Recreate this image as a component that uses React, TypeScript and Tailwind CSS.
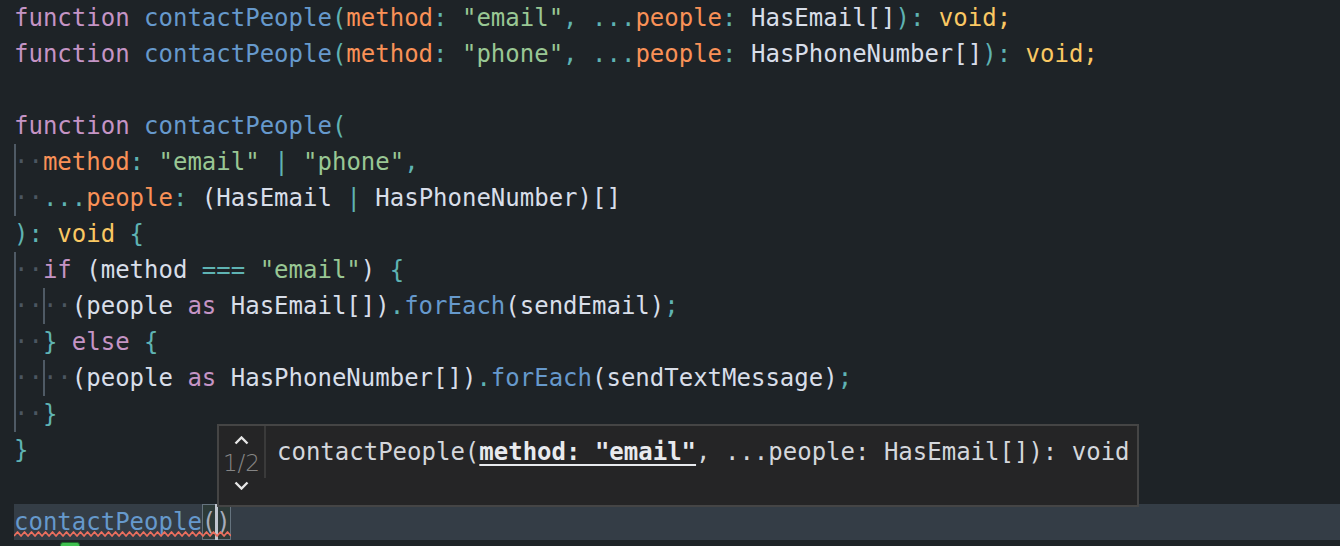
type C = "kw" | "fn" | "pm" | "st" | "pu" | "ty" | "vd";
type Tok = [string, C];

const color: Record<C, string> = {
	kw: "text-[#c594c5]",
	fn: "text-[#6699cc]",
	pm: "text-[#f99157]",
	st: "text-[#99c794]",
	pu: "text-[#5fb3b3]",
	ty: "text-[#d8dee9]",
	vd: "text-[#fac863]",
};

// indent: list of cells, true = cell carries an indent guide
type Line = { indent?: boolean[]; toks: Tok[] };

const lines: Line[] = [
	{
		toks: [
			["function", "kw"], [" ", "ty"], ["contactPeople", "fn"], ["(", "pu"], ["method", "pm"], [":", "pu"],
			[" ", "ty"], ['"email"', "st"], [",", "pu"], [" ", "ty"], ["...", "pu"], ["people", "pm"], [":", "pu"],
			[" ", "ty"], ["HasEmail[]", "ty"], [")", "pu"], [":", "pu"], [" ", "ty"], ["void", "vd"], [";", "vd"],
		],
	},
	{
		toks: [
			["function", "kw"], [" ", "ty"], ["contactPeople", "fn"], ["(", "pu"], ["method", "pm"], [":", "pu"],
			[" ", "ty"], ['"phone"', "st"], [",", "pu"], [" ", "ty"], ["...", "pu"], ["people", "pm"], [":", "pu"],
			[" ", "ty"], ["HasPhoneNumber[]", "ty"], [")", "pu"], [":", "pu"], [" ", "ty"], ["void", "vd"], [";", "vd"],
		],
	},
	{ toks: [] },
	{ toks: [["function", "kw"], [" ", "ty"], ["contactPeople", "fn"], ["(", "pu"]] },
	{
		indent: [true, false],
		toks: [["method", "pm"], [":", "pu"], [" ", "ty"], ['"email"', "st"], [" ", "ty"], ["|", "pu"], [" ", "ty"], ['"phone"', "st"], [",", "pu"]],
	},
	{
		indent: [true, false],
		toks: [["...", "pu"], ["people", "pm"], [":", "pu"], [" (HasEmail ", "ty"], ["|", "pu"], [" HasPhoneNumber)[]", "ty"]],
	},
	{ toks: [[")", "pu"], [":", "pu"], [" ", "ty"], ["void", "vd"], [" ", "ty"], ["{", "pu"]] },
	{
		indent: [true, false],
		toks: [["if", "kw"], [" (method ", "ty"], ["===", "pu"], [" ", "ty"], ['"email"', "st"], [")", "ty"], [" ", "ty"], ["{", "pu"]],
	},
	{
		indent: [true, false, true, false],
		toks: [["(people ", "ty"], ["as", "kw"], [" HasEmail[])", "ty"], [".", "pu"], ["forEach", "fn"], ["(sendEmail)", "ty"], [";", "pu"]],
	},
	{ indent: [true, false], toks: [["}", "pu"], [" ", "ty"], ["else", "kw"], [" ", "ty"], ["{", "pu"]] },
	{
		indent: [true, false, true, false],
		toks: [["(people ", "ty"], ["as", "kw"], [" HasPhoneNumber[])", "ty"], [".", "pu"], ["forEach", "fn"], ["(sendTextMessage)", "ty"], [";", "pu"]],
	},
	{ indent: [true, false], toks: [["}", "pu"]] },
	{ toks: [["}", "pu"]] },
	{ toks: [] },
];

function Space({ guide }: { guide: boolean }) {
	return (
		<span
			className={
				guide
					? "inline-block h-9 align-top text-[#4b5661] shadow-[inset_2px_0_0_#4f5a65]"
					: "text-[#4b5661]"
			}
		>
			·
		</span>
	);
}

function Squiggle() {
	let d = "M0 5";
	for (let i = 1; i * 3.5 <= 217; i++) d += ` L${i * 3.5} ${i % 2 === 1 ? 1 : 5}`;
	return (
		<svg className="absolute left-0 top-[27px]" width="217" height="7" viewBox="0 0 217 7">
			<path d={d} fill="none" stroke="#ec6f5e" strokeWidth="1.8" strokeLinejoin="round" />
		</svg>
	);
}

function Chevron({ up }: { up?: boolean }) {
	return (
		<svg width="15" height="9" viewBox="0 0 15 9">
			<polyline
				points={up ? "1.5,7.5 7.5,1.5 13.5,7.5" : "1.5,1.5 7.5,7.5 13.5,1.5"}
				fill="none"
				stroke="#e6e6e6"
				strokeWidth="2.4"
			/>
		</svg>
	);
}

export default function App() {
	return (
		<div className="relative h-[546px] w-[1340px] overflow-hidden bg-[#1e2327] font-['DejaVu_Sans_Mono',monospace] text-[24px] leading-9 whitespace-pre">
			{/* ── code ── */}
			<div className="pl-[14px]">
				{lines.map((line, i) => (
					<div key={i} className="h-9">
						{line.indent?.map((g, j) => <Space key={j} guide={g} />)}
						{line.toks.map(([text, c], j) => (
							<span key={j} className={color[c]}>
								{text}
							</span>
						))}
					</div>
				))}
			</div>

			{/* ── current line ── */}
			<div className="relative ml-[14px] h-9 bg-[#343d46] text-[#6699cc]">
				contactPeople
				<span className="inline-block h-9 align-top bg-[#2d3a38] text-[#a7adba] shadow-[inset_0_0_0_1px_#65737e]">(</span>
				<span className="inline-block h-9 align-top bg-[#2d3a38] text-[#a7adba] shadow-[inset_0_0_0_1px_#65737e]">)</span>
				<span className="absolute left-[201px] top-0 h-9 w-[3px] bg-[#c0c5ce]" />
				<Squiggle />
			</div>

			{/* gutter marker peeking from below */}
			<div className="absolute left-[60px] top-[542px] h-[8px] w-[20px] rounded-[3px] border border-[#1d6b2a] bg-[#3fbf4f]" />

			{/* ── signature help ── */}
			<div className="absolute left-[217px] top-[424px] flex h-[83px] w-[922px] border-2 border-[#454545] bg-[#252526]">
				<div className="flex w-[45px] flex-col items-center pt-[10px]">
					<Chevron up />
					<span className="mt-[5px] font-['DejaVu_Sans',sans-serif] text-[23px] leading-[26px] font-light text-[#858585]">1/2</span>
					<span className="mt-[5px] flex">
						<Chevron />
					</span>
				</div>
				<div className="h-[52px] w-[2px] bg-[#3a3a3a]" />
				<div className="pl-[11px] pt-2 text-[#d4d7dc]">
					contactPeople(
					<span className="font-bold text-[#e8eaee] underline decoration-2 underline-offset-4">method: "email"</span>
					, ...people: HasEmail[]): void
				</div>
			</div>
		</div>
	);
}
